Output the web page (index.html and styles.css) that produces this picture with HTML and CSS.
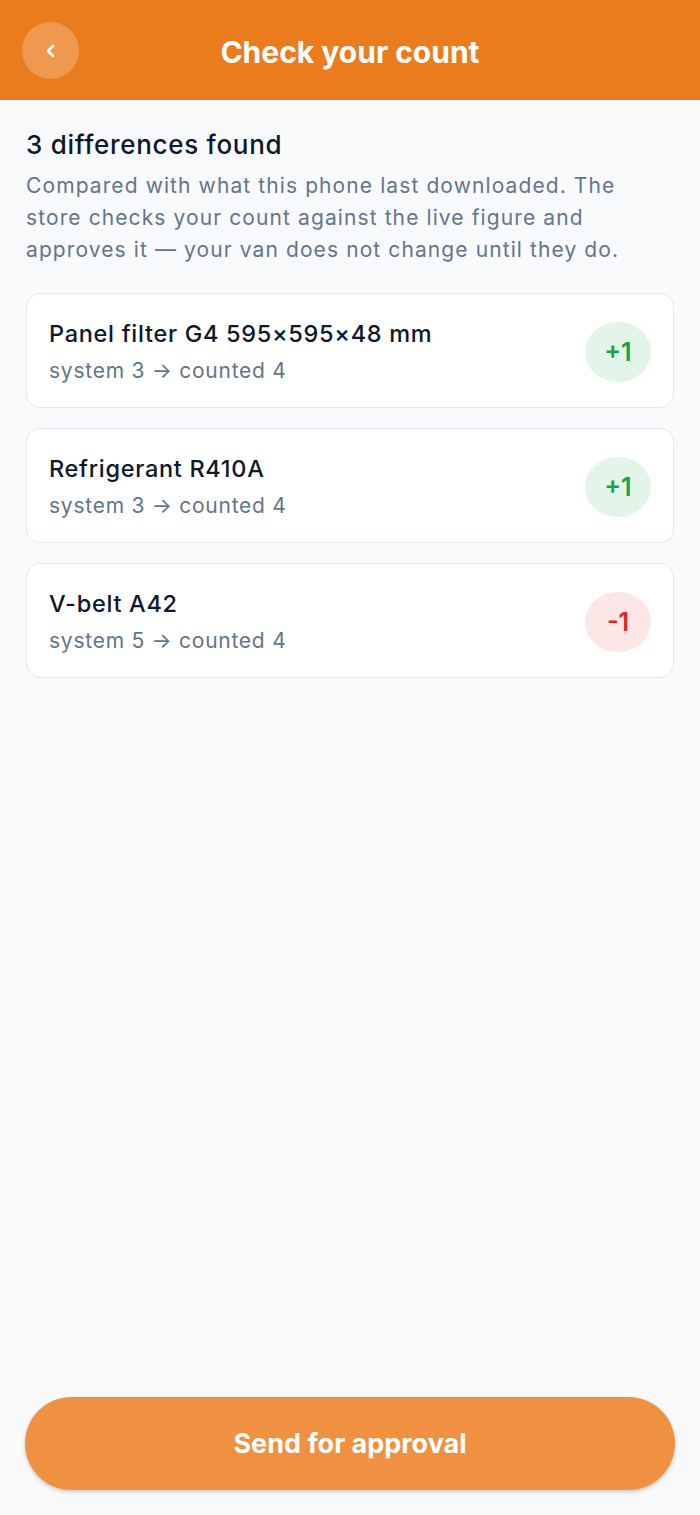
FILE: index.html
```html
<!DOCTYPE html>
<html lang="en">
  <head>
    <meta charset="UTF-8" />
    <title>Check your count</title>
    <link rel="stylesheet" href="styles.css">
  </head>
  <body>
    <div class="page">
      <header class="topbar">
        <button class="back" aria-label="Back">
          <svg width="20" height="20" viewBox="0 0 20 20" fill="none">
            <path d="M12 5 L7 10 L12 15" stroke="#fff" stroke-width="2.6" stroke-linecap="round" stroke-linejoin="round" />
          </svg>
        </button>
        <h1 class="title">Check your count</h1>
      </header>

      <main class="content">
        <h2 class="summary">3 differences found</h2>
        <p class="note">Compared with what this phone last downloaded. The store checks your count against the live figure and approves it — your van does not change until they do.</p>

        <div class="list">
          <div class="item">
            <div class="info">
              <div class="name">Panel filter G4 595×595×48 mm</div>
              <div class="detail">system 3 → counted 4</div>
            </div>
            <span class="diff up">+1</span>
          </div>
          <div class="item">
            <div class="info">
              <div class="name">Refrigerant R410A</div>
              <div class="detail">system 3 → counted 4</div>
            </div>
            <span class="diff up">+1</span>
          </div>
          <div class="item">
            <div class="info">
              <div class="name">V-belt A42</div>
              <div class="detail">system 5 → counted 4</div>
            </div>
            <span class="diff down">-1</span>
          </div>
        </div>
      </main>

      <footer class="actions">
        <button class="send">Send for approval</button>
      </footer>
    </div>
  </body>
</html>
```

FILE: styles.css
```css
* {
  box-sizing: border-box;
}
body {
  margin: 0;
  background-color: #f8fafc;
  font-family: Inter, "Noto Sans", sans-serif;
}
.page {
  min-height: 100vh;
  display: flex;
  flex-direction: column;
}
.topbar {
  height: 100px;
  background-color: #eb7c1e;
  display: flex;
  align-items: center;
  justify-content: center;
  position: relative;
}
.back {
  position: absolute;
  left: 22px;
  top: 22px;
  width: 57px;
  height: 57px;
  border-radius: 50%;
  border: none;
  background-color: rgba(255, 255, 255, 0.22);
  display: flex;
  align-items: center;
  justify-content: center;
  padding: 0;
}
.title {
  margin: 0 0 -4px;
  color: #fff;
  font-size: 30px;
  font-weight: 700;
  letter-spacing: 0;
}
.content {
  flex: 1;
  padding: 28px 26px 0;
}
.summary {
  margin: 0;
  font-size: 26px;
  font-weight: 500;
  color: #0f172a;
  line-height: 34px;
  letter-spacing: 0.7px;
}
.note {
  margin: 8px 0 0;
  font-size: 21px;
  line-height: 32px;
  color: #64748b;
  letter-spacing: 1.1px;
}
.list {
  margin-top: 27px;
  display: flex;
  flex-direction: column;
  gap: 20px;
}
.item {
  height: 115px;
  background-color: #fff;
  border: 1px solid #e2e8f0;
  border-radius: 14px;
  padding: 3px 22px 0 22px;
  display: flex;
  align-items: center;
  justify-content: space-between;
}
.name {
  font-size: 23.5px;
  font-weight: 500;
  color: #0f172a;
  line-height: 30px;
  letter-spacing: 0.7px;
}
.detail {
  margin-top: 8px;
  font-size: 21px;
  color: #64748b;
  line-height: 28px;
  letter-spacing: 0.75px;
}
.diff {
  width: 66px;
  height: 60px;
  border-radius: 50%;
  display: flex;
  align-items: center;
  justify-content: center;
  font-size: 25px;
  font-weight: 600;
}
.up {
  background-color: #e3f5e8;
  color: #16a34a;
}
.down {
  background-color: #fde6e6;
  color: #dc2626;
}
.actions {
  padding: 0 25px 25px;
}
.send {
  width: 100%;
  height: 93px;
  border: none;
  border-radius: 47px;
  background-color: #ef9140;
  color: #fff;
  font-family: Inter, "Noto Sans", sans-serif;
  font-size: 27px;
  font-weight: 700;
  box-shadow: 0 2px 4px rgba(0, 0, 0, 0.2);
}
```
